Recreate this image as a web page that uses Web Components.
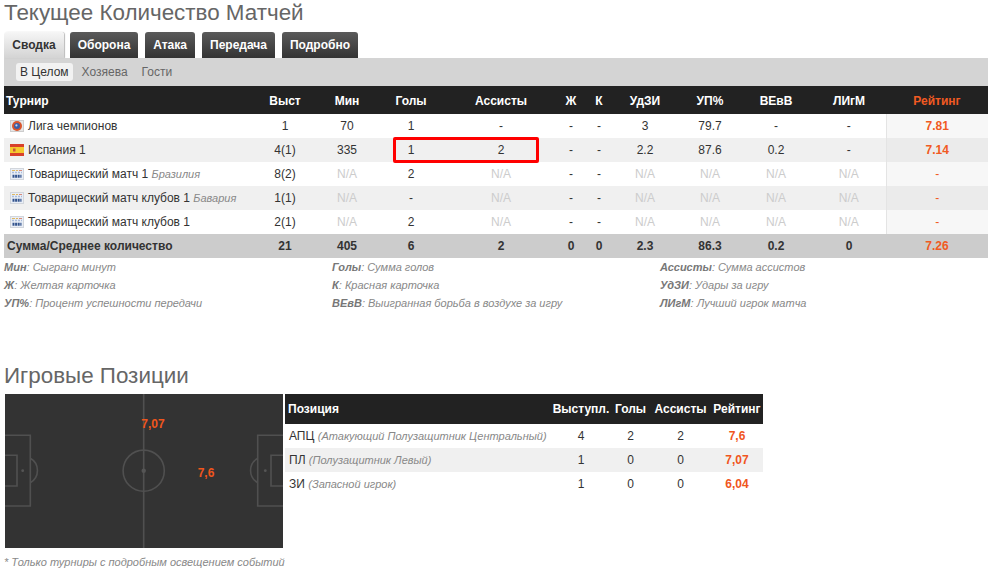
<!DOCTYPE html>
<html lang="ru"><head><meta charset="utf-8"><title>Статистика</title>
<style>
html,body{margin:0;padding:0;background:#fff}
body{font:12px "Liberation Sans",Arial,sans-serif;color:#333;width:1002px;height:574px;overflow:hidden}
main{display:block;padding-left:4px;width:984px}
</style></head><body>
<main>
<section-title style="height:32px">Текущее Количество Матчей</section-title>
<stat-tabs></stat-tabs>
<sub-tabs></sub-tabs>
<stats-table></stats-table>
<stat-legend></stat-legend>
<section-title style="height:31px;margin-top:51px">Игровые Позиции</section-title>
<position-panel></position-panel>
<foot-note>* Только турниры с подробным освещением событий</foot-note>
</main>
<script>
const sh=(el,html)=>{el.attachShadow({mode:'open'}).innerHTML=html};
const icons={
uefa:`<svg width="14" height="12" viewBox="0 0 14 12"><rect x=".5" y=".5" width="13" height="11" fill="#e6e6e6" stroke="#cdcdcd"/><circle cx="7" cy="6" r="5" fill="#d9552b"/><circle cx="7" cy="6" r="3" fill="#3a5fa8"/><circle cx="6.4" cy="5.4" r="1.1" fill="#c9d4ea"/></svg>`,
es:`<svg width="14" height="12" viewBox="0 0 14 12"><rect width="14" height="12" fill="#d8402b"/><rect y="3" width="14" height="6" fill="#f5c92e"/><rect x="3" y="4.5" width="2.5" height="3" fill="#c8553a"/></svg>`,
fifa:`<svg width="14" height="12" viewBox="0 0 14 12"><rect x=".5" y=".5" width="13" height="11" fill="#e9eef6" stroke="#d2d6dc"/><path d="M2 2.5h3M6 2.5h2" stroke="#e0b860"/><path d="M9 2.5h3" stroke="#d98a7a"/><path d="M2 4.5h10" stroke="#a9bcdb" stroke-width="1.6" stroke-dasharray="2 1"/><path d="M2.5 8.2h9" stroke="#33548e" stroke-width="3" stroke-dasharray="2 .6"/></svg>`};
customElements.define('section-title',class extends HTMLElement{constructor(){super();sh(this,`<style>:host{display:block;font:22.4px/26px "Liberation Sans",Arial,sans-serif;color:#666;white-space:nowrap}</style><slot></slot>`)}});
customElements.define('stat-tabs',class extends HTMLElement{constructor(){super();
sh(this,`<style>:host{display:flex;gap:7px;height:26px;align-items:stretch}
a{display:flex;align-items:center;justify-content:center;box-sizing:border-box;font:bold 12px "Liberation Sans",Arial,sans-serif;color:#fff;background:linear-gradient(#5a5a5a,#333);border-radius:3px 3px 0 0}
a.on{background:linear-gradient(#f6f6f6,#d4d4d4);color:#333;box-shadow:1px 0 1px #bbb;margin-right:-1px}</style>
<a class="on" style="width:60px">Сводка</a><a style="width:68px">Оборона</a><a style="width:50px">Атака</a><a style="width:73px">Передача</a><a style="width:76px">Подробно</a>`)}});
customElements.define('sub-tabs',class extends HTMLElement{constructor(){super();
sh(this,`<style>:host{display:flex;gap:6px;height:28px;background:#d4d4d4;padding:5px 12px 5px;box-sizing:border-box;align-items:flex-start}
a{font:12px/18px "Liberation Sans",Arial,sans-serif;color:#666;padding:0 4px;border-radius:3px}
a.on{background:#f2f2f2;color:#333;margin-right:-1px}</style><a class="on">В Целом</a><a>Хозяева</a><a>Гости</a>`)}});
const H=['Выст','Мин','Голы','Ассисты','Ж','К','УдЗИ','УП%','ВЕвВ','ЛИгМ'];
const R=[
['uefa','Лига чемпионов','','1','70','1','-','-','-','3','79.7','-','-','7.81'],
['es','Испания 1','','4(1)','335','1','2','-','-','2.2','87.6','0.2','-','7.14'],
['fifa','Товарищеский матч 1','Бразилия','8(2)','N/A','2','N/A','-','-','N/A','N/A','N/A','N/A','-'],
['fifa','Товарищеский матч клубов 1','Бавария','1(1)','N/A','-','N/A','-','-','N/A','N/A','N/A','N/A','-'],
['fifa','Товарищеский матч клубов 1','','2(1)','N/A','2','N/A','-','-','N/A','N/A','N/A','N/A','-']];
const S=['21','405','6','2','0','0','2.3','86.3','0.2','0','7.26'];
const cell=v=>`<td${v==='N/A'?' class="na"':''}>${v}</td>`;
customElements.define('stats-table',class extends HTMLElement{constructor(){super();
sh(this,`<style>:host{display:block;position:relative}
table{border-collapse:collapse;table-layout:fixed;width:984px;font:12px "Liberation Sans",Arial,sans-serif;color:#333}
th{background:#222;color:#fff;height:26px;padding:2px 0 0;font-weight:bold}
th:first-child{text-align:left;padding-left:2px}
td{height:24px;padding:0;text-align:center;white-space:nowrap}
td.n{text-align:left;padding-left:6px}
td.n svg{vertical-align:-2px;margin-right:4px}
td.n i{font-size:11px;color:#888}
th:nth-child(11),td:nth-child(11){padding-left:3px}
tbody tr:nth-child(even){background:#f0f0f0}
.na{color:#ccc}
.r{color:#f15a22;font-weight:bold;background:#f7f7f7;border-left:1px solid #e4e4e4}
.r.d{font-weight:normal}
tr:nth-child(even) .r{background:#ebebeb}
th.r{background:#222;border:0}
tfoot td{background:#ccc;font-weight:bold;color:#333}
tfoot td.n{padding-left:3px}
tfoot .r{background:#ccc;border:0;color:#f15a22}
.mark{position:absolute;left:389px;top:51px;width:146px;height:26px;box-sizing:border-box;border:3px solid #f00;border-radius:2px}
</style><table><colgroup><col style="width:249px"><col style="width:64px"><col style="width:60px"><col style="width:68px"><col style="width:112px"><col style="width:28px"><col style="width:28px"><col style="width:64px"><col style="width:66px"><col style="width:66px"><col style="width:77px"><col></colgroup>
<thead><tr><th>Турнир</th>${H.map(h=>`<th>${h}</th>`).join('')}<th class="r">Рейтинг</th></tr></thead>
<tbody>${R.map(r=>`<tr><td class="n">${icons[r[0]]}${r[1]}${r[2]?` <i>${r[2]}</i>`:''}</td>${r.slice(3,13).map(cell).join('')}<td class="r${r[13]==='-'?' d':''}">${r[13]}</td></tr>`).join('')}</tbody>
<tfoot><tr><td class="n">Сумма/Среднее количество</td>${S.slice(0,10).map(cell).join('')}<td class="r">${S[10]}</td></tr></tfoot></table><div class="mark"></div>`)}});
customElements.define('stat-legend',class extends HTMLElement{constructor(){super();
const L=[['Мин','Сыграно минут'],['Голы','Сумма голов'],['Ассисты','Сумма ассистов'],['Ж','Желтая карточка'],['К','Красная карточка'],['УдЗИ','Удары за игру'],['УП%','Процент успешности передачи'],['ВЕвВ','Выигранная борьба в воздухе за игру'],['ЛИгМ','Лучший игрок матча']];
sh(this,`<style>:host{display:grid;grid-template-columns:328px 328px 1fr;grid-auto-rows:18px;font:italic 11px/18px "Liberation Sans",Arial,sans-serif;color:#888}b{color:#777}</style>`+L.map(x=>`<div><b>${x[0]}</b>: ${x[1]}</div>`).join(''))}});
customElements.define('pitch-map',class extends HTMLElement{constructor(){super();
const side=`<path d="M0 41.3H25.3V112H0M0 61.3H12V92H0M25.3 64.3A14 14 0 0 1 25.3 88.7"/><circle cx="17.7" cy="76.7" r="1.4" fill="#555" stroke="none"/>`;
sh(this,`<style>:host{display:block;position:relative;width:278px;height:154px;background:#333;flex:none;margin-left:1px}svg{display:block}
b{position:absolute;font:bold 12px/14px "Liberation Sans",Arial,sans-serif;color:#f0561d;transform:translate(-50%,-50%)}</style>
<svg width="278" height="154" viewBox="0 0 278 154" fill="none" stroke="#505050" stroke-width="1.6"><path d="M138.7 0V154"/><circle cx="138.7" cy="76.7" r="20.6"/><circle cx="138.7" cy="76.7" r="2.2" fill="#555" stroke="none"/>${side}<g transform="translate(278 0) scale(-1 1)">${side}</g></svg>
<b style="left:148px;top:30px">7,07</b><b style="left:201px;top:79px">7,6</b>`)}});
customElements.define('position-panel',class extends HTMLElement{constructor(){super();
const P=[['АПЦ','Атакующий Полузащитник Центральный','4','2','2','7,6'],['ПЛ','Полузащитник Левый','1','0','0','7,07'],['ЗИ','Запасной игрок','1','0','0','6,04']];
sh(this,`<style>:host{display:flex;gap:2px;align-items:flex-start;height:154px}
table{border-collapse:collapse;table-layout:fixed;width:478px;font:12px "Liberation Sans",Arial,sans-serif;color:#333}
th{background:#222;color:#fff;height:30px;padding:0;font-weight:bold;white-space:nowrap}
th:first-child{text-align:left;padding-left:3px}
td{height:24px;padding:0;text-align:center;white-space:nowrap}
td:first-child{text-align:left;padding-left:4px}
i{font-size:11px;color:#888}
tbody tr:nth-child(even){background:#f0f0f0}
.r{color:#f0561d;font-weight:bold}</style><pitch-map></pitch-map>
<table><colgroup><col style="width:266px"><col style="width:60px"><col style="width:39px"><col style="width:61px"><col></colgroup>
<thead><tr><th>Позиция</th><th>Выступл.</th><th>Голы</th><th>Ассисты</th><th>Рейтинг</th></tr></thead>
<tbody>${P.map(p=>`<tr><td>${p[0]} <i>(${p[1]})</i></td><td>${p[2]}</td><td>${p[3]}</td><td>${p[4]}</td><td class="r">${p[5]}</td></tr>`).join('')}</tbody></table>`)}});
customElements.define('foot-note',class extends HTMLElement{constructor(){super();sh(this,`<style>:host{display:block;margin-top:7px;font:italic 11px/14px "Liberation Sans",Arial,sans-serif;color:#888;white-space:nowrap}</style><slot></slot>`)}});
</script>
</body></html>
